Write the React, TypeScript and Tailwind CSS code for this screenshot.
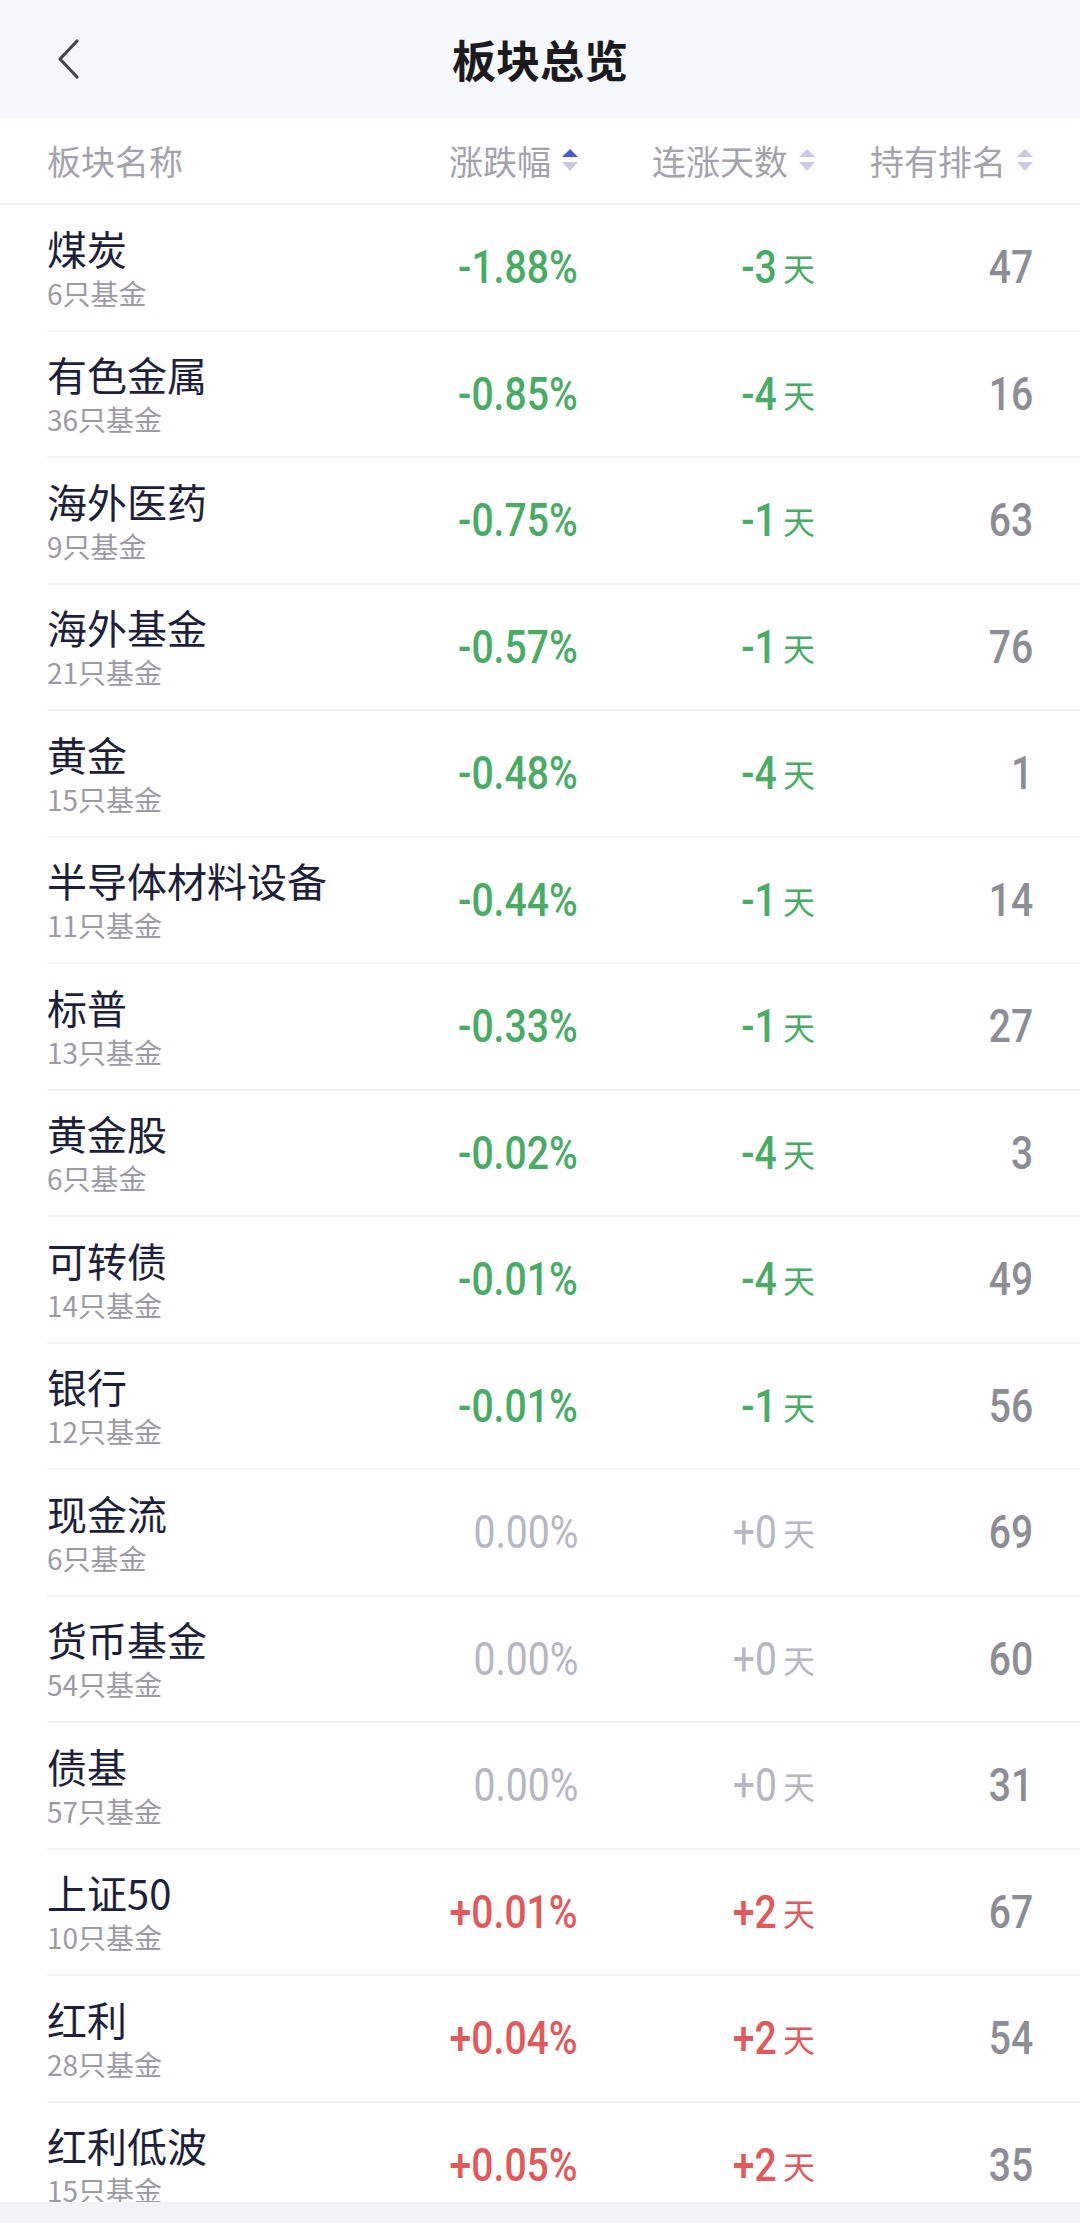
import React from "react";

type Row = { name: string; count: number; pct: string; days: string; rank: number; dir: "down" | "flat" | "up" };

const rows: Row[] = [
  { name: "煤炭", count: 6, pct: "-1.88%", days: "-3", rank: 47, dir: "down" },
  { name: "有色金属", count: 36, pct: "-0.85%", days: "-4", rank: 16, dir: "down" },
  { name: "海外医药", count: 9, pct: "-0.75%", days: "-1", rank: 63, dir: "down" },
  { name: "海外基金", count: 21, pct: "-0.57%", days: "-1", rank: 76, dir: "down" },
  { name: "黄金", count: 15, pct: "-0.48%", days: "-4", rank: 1, dir: "down" },
  { name: "半导体材料设备", count: 11, pct: "-0.44%", days: "-1", rank: 14, dir: "down" },
  { name: "标普", count: 13, pct: "-0.33%", days: "-1", rank: 27, dir: "down" },
  { name: "黄金股", count: 6, pct: "-0.02%", days: "-4", rank: 3, dir: "down" },
  { name: "可转债", count: 14, pct: "-0.01%", days: "-4", rank: 49, dir: "down" },
  { name: "银行", count: 12, pct: "-0.01%", days: "-1", rank: 56, dir: "down" },
  { name: "现金流", count: 6, pct: "0.00%", days: "+0", rank: 69, dir: "flat" },
  { name: "货币基金", count: 54, pct: "0.00%", days: "+0", rank: 60, dir: "flat" },
  { name: "债基", count: 57, pct: "0.00%", days: "+0", rank: 31, dir: "flat" },
  { name: "上证50", count: 10, pct: "+0.01%", days: "+2", rank: 67, dir: "up" },
  { name: "红利", count: 28, pct: "+0.04%", days: "+2", rank: 54, dir: "up" },
  { name: "红利低波", count: 15, pct: "+0.05%", days: "+2", rank: 35, dir: "up" },
];

const cjk = { fontFamily: '"Noto Sans CJK SC", "Noto Sans", sans-serif' };
const num = { fontFamily: 'Roboto, "Noto Sans", sans-serif' };

function SortIcon({ active }: { active?: boolean }) {
  return (
    <svg width="16" height="24" viewBox="0 0 16 24" className="ml-[11px]">
      <polygon points="8,0 16,8 0,8" fill={active ? "#4a5ad2" : "#c8cbe2"} />
      <polygon points="0,13 16,13 8,22" fill="#c8cbe2" />
    </svg>
  );
}

function colorFor(dir: Row["dir"]) {
  if (dir === "down") return "text-[#4aab67] font-medium";
  if (dir === "up") return "text-[#df5a5c] font-medium";
  return "text-[#b5b8c1] font-normal";
}

export default function App() {
  return (
    <div className="w-[1080px] h-[2223px] overflow-hidden flex flex-col bg-white" style={cjk}>
      {/* Top bar */}
      <div className="h-[118px] shrink-0 bg-[#f6f7fb] flex items-center">
        <div className="w-[140px] pl-[55px] flex items-center">
          <svg width="28" height="44" viewBox="0 0 28 44">
            <polyline points="22,4 5,22 22,40" fill="none" stroke="#474747" strokeWidth="3.2" strokeLinecap="round" strokeLinejoin="round" />
          </svg>
        </div>
        <div className="flex-1 text-center text-[44px] font-bold text-[#1b1b1f] leading-none">板块总览</div>
        <div className="w-[140px]" />
      </div>

      {/* Column headers */}
      <div className="h-[87px] shrink-0 flex items-center px-[47px] border-b-2 border-[#f1f1f4] text-[34px] text-[#a3a3ab]">
        <div className="flex-1">板块名称</div>
        <div className="w-[240px] flex items-center justify-end">
          涨跌幅
          <SortIcon active />
        </div>
        <div className="w-[237px] flex items-center justify-end">
          连涨天数
          <SortIcon />
        </div>
        <div className="w-[218px] flex items-center justify-end">
          持有排名
          <SortIcon />
        </div>
      </div>

      {/* List */}
      <div className="flex-1 overflow-hidden">
        {rows.map((r) => (
          <div key={r.name} className="h-[126.5px] ml-[47px] pr-[47px] flex items-center border-b-2 border-[#f4f4f6]">
            <div className="flex-1 flex flex-col">
              <div className="text-[40px] leading-[48px] text-[#1d1f3b]">{r.name}</div>
              <div className="mt-[3px] text-[28px] leading-[36px] text-[#9b9ba3]">{r.count}只基金</div>
            </div>
            <div className={`w-[240px] text-right text-[46px] leading-none ${colorFor(r.dir)}`} style={num}>
              <span className="inline-block origin-right scale-x-[0.85]">{r.pct}</span>
            </div>
            <div className={`w-[237px] flex items-center justify-end ${colorFor(r.dir)}`}>
              <span className="inline-block origin-right scale-x-[0.85] text-[46px] leading-[46px]" style={num}>
                {r.days}
              </span>
              <span className="ml-[6px] text-[32px] leading-[40px] font-normal" style={cjk}>
                天
              </span>
            </div>
            <div className="w-[218px] text-right text-[46px] leading-none font-medium text-[#8d8d96]" style={num}>
              <span className="inline-block origin-right scale-x-[0.85]">{r.rank}</span>
            </div>
          </div>
        ))}
      </div>

      {/* Bottom band */}
      <div className="h-[21px] shrink-0 bg-[#f3f3f5]" />
    </div>
  );
}
